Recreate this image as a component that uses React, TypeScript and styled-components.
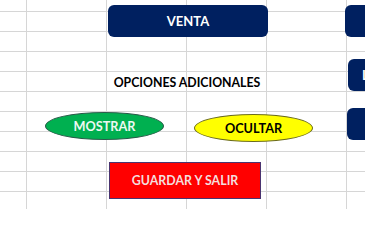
import * as React from 'react'
import styled, { createGlobalStyle } from 'styled-components'

const GlobalStyle = createGlobalStyle`
  html, body {
    margin: 0;
    padding: 0;
    overflow: hidden;
    background: #ffffff;
  }
  body {
    font-family: Lato, "Open Sans", "Liberation Sans", sans-serif;
  }
`

const Sheet = styled.div`
  display: flex;
  width: 365px;
  height: 209px;
  overflow: hidden;
  background-color: #ffffff;
  background-image:
    linear-gradient(to right, #d6d6d6 1px, transparent 1px),
    linear-gradient(to bottom, #d6d6d6 1px, transparent 1px);
  background-size: 80px 100%, 100% 20px;
  background-position: 26px 0, 0 11px;
`

const Main = styled.div`
  display: flex;
  flex-direction: column;
  align-items: flex-start;
  flex: 0 0 345px;
  padding-top: 5px;
`

const Side = styled.div`
  display: flex;
  flex-direction: column;
  align-items: flex-start;
  flex: 0 0 80px;
`

const Label = styled.div`
  font-weight: 700;
  white-space: nowrap;
  display: flex;
  align-items: center;
  justify-content: center;
`

const NavyButton = styled(Label)<{ $top: number; $left?: number }>`
  margin-top: ${p => p.$top}px;
  margin-left: ${p => p.$left ?? 0}px;
  height: 32px;
  background: #002060;
  color: #ffffff;
  border-radius: 6px;
  font-size: 13px;
`

const VentaButton = styled(NavyButton)`
  width: 160px;
`

const SideButton = styled(NavyButton)`
  width: 80px;
  justify-content: flex-start;
  padding-left: 14px;
  box-sizing: border-box;
`

const Heading = styled(Label)`
  margin-top: 35px;
  margin-left: 108px;
  width: 158px;
  height: 20px;
  color: #000000;
  font-size: 12.3px;
`

const ShapeRow = styled.div`
  display: flex;
  align-items: flex-start;
  margin-top: 20px;
`

const Ellipse = styled(Label)<{ $fill: string; $stroke: string; $ink: string; $left: number; $top: number }>`
  margin-left: ${p => p.$left}px;
  margin-top: ${p => p.$top}px;
  width: 119px;
  height: 28px;
  box-sizing: border-box;
  border-radius: 50%;
  background: ${p => p.$fill};
  border: 1px solid ${p => p.$stroke};
  color: ${p => p.$ink};
  font-size: 12.7px;
`

const SaveButton = styled(Label)`
  margin-top: 20px;
  margin-left: 109px;
  width: 152px;
  height: 37px;
  box-sizing: border-box;
  background: #ff0000;
  border: 1px solid #4a3470;
  color: #f4dede;
  font-size: 12.4px;
`

export default function App() {
  return (
    <>
      <GlobalStyle />
      <Sheet>
        <Main>
          <VentaButton $top={0} $left={108}>VENTA</VentaButton>
          <Heading>OPCIONES ADICIONALES</Heading>
          <ShapeRow>
            <Ellipse $fill="#00b050" $stroke="#2b5b4a" $ink="#eef8f1" $left={45} $top={0}>MOSTRAR</Ellipse>
            <Ellipse $fill="#ffff00" $stroke="#6b6b1e" $ink="#000000" $left={30} $top={2}>OCULTAR</Ellipse>
          </ShapeRow>
          <SaveButton>GUARDAR Y SALIR</SaveButton>
        </Main>
        <Side>
          <SideButton $top={5}>&nbsp;</SideButton>
          <SideButton $top={22} $left={3}>LIMPIAR</SideButton>
          <SideButton $top={17} $left={2}>&nbsp;</SideButton>
        </Side>
      </Sheet>
    </>
  )
}
